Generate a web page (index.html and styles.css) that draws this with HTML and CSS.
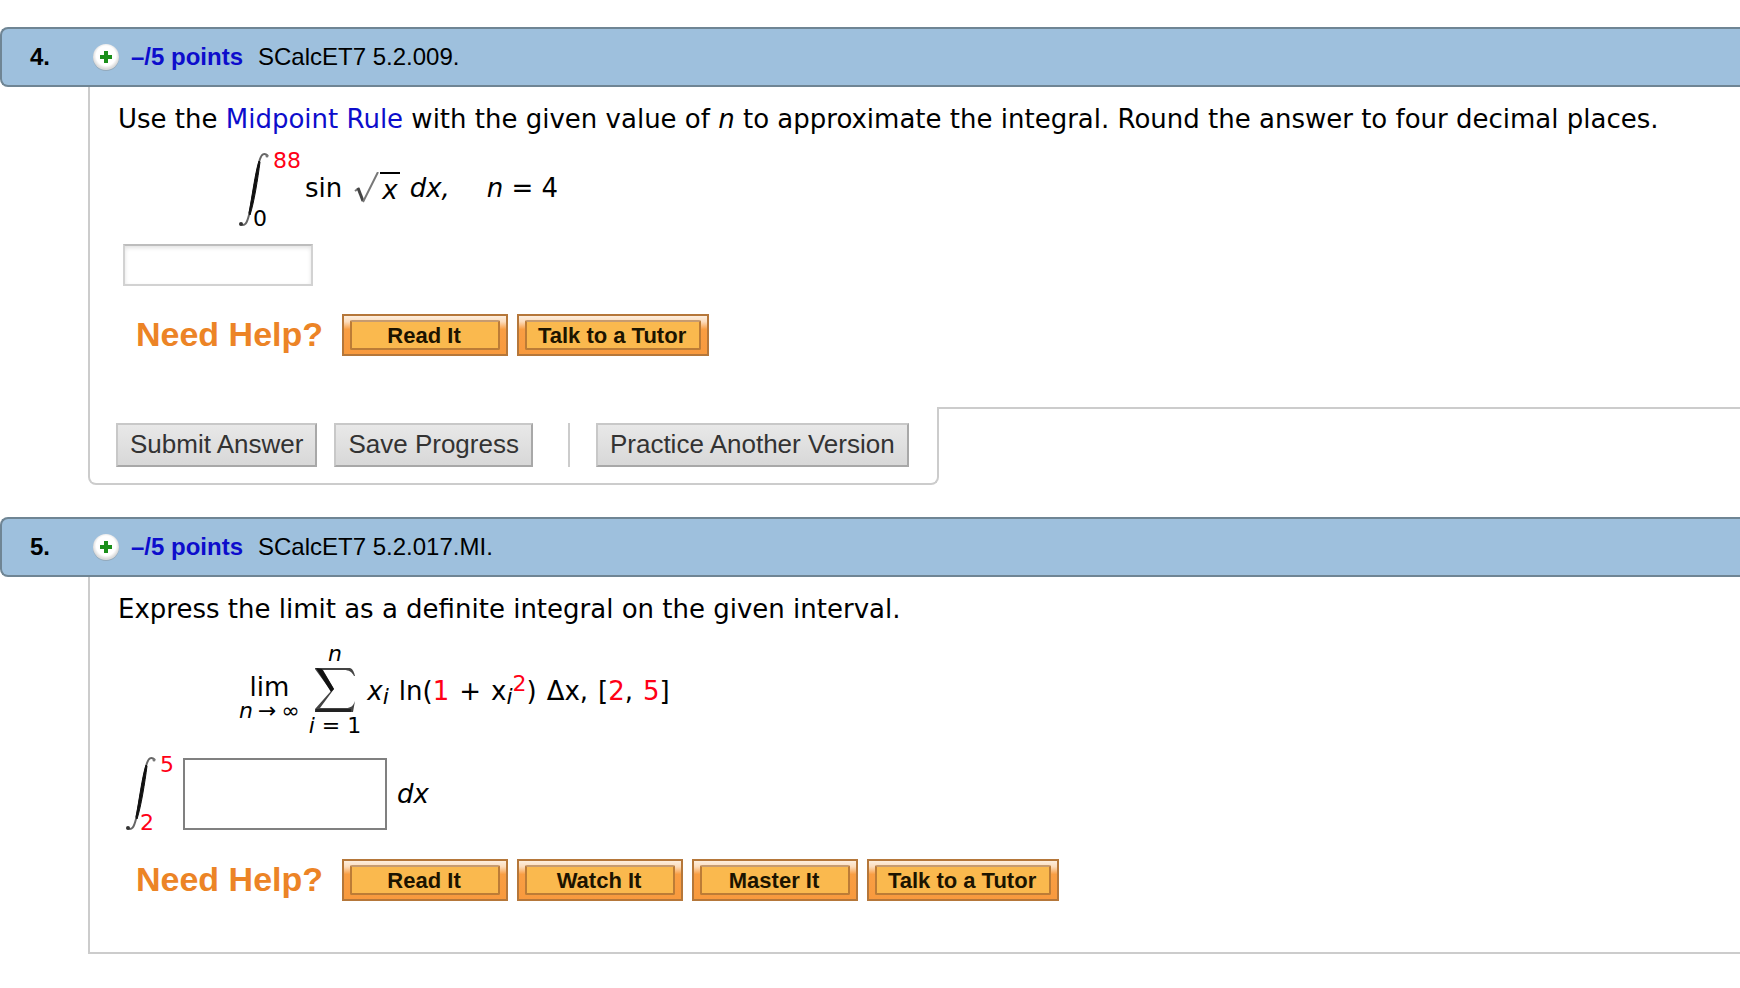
FILE: index.html
```html
<!DOCTYPE html>
<html lang="en">
<head>
    <meta charset="utf-8">
    <title>SCalcET7 5.2</title>
    <link rel="stylesheet" href="styles.css">
</head>
<body>
    <!-- shared symbols -->
    <svg class="defs" width="0" height="0">
        <defs>
            <radialGradient id="knob" cx="50%" cy="45%" r="50%">
                <stop offset="0.75" stop-color="#fff"/>
                <stop offset="1" stop-color="#dcdcdc"/>
            </radialGradient>
            <symbol id="plus" viewBox="0 0 28 28">
                <circle cx="14" cy="15" r="13" fill="#8b99a5" opacity="0.6"/>
                <circle cx="14" cy="14" r="13" fill="url(#knob)"/>
                <path d="M12 8h4v4h4v4h-4v4h-4v-4h-4v-4h4z" fill="#1a8f1a"/>
            </symbol>
            <symbol id="integral" viewBox="0 0 32 74">
                <path d="M29 3C26 0 23 0 21 6C18 15 13 50 10 62C8 70 6 74 1 71" fill="none" stroke="#666" stroke-width="2"/>
                <path d="M20 8C16 20 13 45 10 60L11 62C15 50 19 25 21 9z" fill="#111" stroke="#111"/>
                <circle cx="28" cy="3" r="1.5" fill="#777"/>
                <circle cx="2" cy="71" r="2" fill="#333"/>
            </symbol>
        </defs>
    </svg>

    <section class="question">
        <header class="question-header">
            <span class="number">4.</span>
            <svg class="plus" aria-hidden="true"><use href="#plus"/></svg>
            <a class="points" href="#">–/5 points</a>
            <span>SCalcET7 5.2.009.</span>
        </header>
        <div class="question-body">
            <p class="prompt">Use the <a href="#">Midpoint Rule</a> with the given value of <i>n</i> to approximate the integral. Round the answer to four decimal places.</p>
            <div class="formula indent">
                <div class="integral">
                    <svg class="integral-sign" aria-hidden="true"><use href="#integral"/></svg>
                    <span class="upper red">88</span>
                    <span class="lower">0</span>
                </div>
                <div class="integrand">
                    <span>sin</span>
                    <span class="root">
                        <svg width="26" height="32" viewBox="0 0 26 32" aria-hidden="true">
                            <path d="M1 19L5 16" fill="none" stroke="#777" stroke-width="2"/>
                            <path d="M4 16L9 29" fill="none" stroke="#444" stroke-width="3"/>
                            <path d="M9 30L24 0" fill="none" stroke="#777" stroke-width="2"/>
                        </svg>
                        <i class="radicand">x</i>
                    </span>
                    <i>dx,</i>
                    <span class="given"><i>n</i> = 4</span>
                </div>
            </div>
            <input class="answer" type="text" aria-label="Answer to question 4">
            <div class="help">
                <span class="help-title">Need Help?</span>
                <button class="help-button">Read It</button>
                <button class="help-button wide">Talk to a Tutor</button>
            </div>
        </div>
        <div class="question-footer">
            <div class="actions">
                <button class="action">Submit Answer</button>
                <button class="action">Save Progress</button>
                <span class="divider"></span>
                <button class="action">Practice Another Version</button>
            </div>
            <div class="footer-line"></div>
        </div>
    </section>

    <section class="question">
        <header class="question-header">
            <span class="number">5.</span>
            <svg class="plus" aria-hidden="true"><use href="#plus"/></svg>
            <a class="points" href="#">–/5 points</a>
            <span>SCalcET7 5.2.017.MI.</span>
        </header>
        <div class="question-body closed">
            <p class="prompt">Express the limit as a definite integral on the given interval.</p>
            <div class="formula indent">
                <div class="limit">
                    <span>lim</span>
                    <span class="limit-under"><i>n</i><span>→</span><span>∞</span></span>
                </div>
                <div class="sum">
                    <i>n</i>
                    <svg width="42" height="46" viewBox="0 0 42 46" aria-hidden="true">
                        <path d="M1 1H36C39 2 40 5 41 9H40C38 5 35 3 30 3H9L20 22L6 41H32C37 41 39 39 41 34L39 45H1V42L17 24L1 2z" fill="#444"/>
                        <path d="M2 1L8 2L20 22L17 25z" fill="#111"/>
                        <path d="M2 42H37V45H1z" fill="#222"/>
                    </svg>
                    <span><i>i</i> = 1</span>
                </div>
                <div class="summand">
                    <span><i>x<sub>i</sub></i></span>
                    <span>ln(<span class="red">1</span></span>
                    <span>+</span>
                    <span>x<sub><i>i</i></sub><sup class="red">2</sup>)</span>
                    <span>Δx,</span>
                    <span>[<span class="red">2</span>,</span>
                    <span><span class="red">5</span>]</span>
                </div>
            </div>
            <div class="formula answer-row">
                <div class="integral">
                    <svg class="integral-sign" aria-hidden="true"><use href="#integral"/></svg>
                    <span class="upper red">5</span>
                    <span class="lower red">2</span>
                </div>
                <input class="math-answer" type="text" aria-label="Integrand">
                <i>dx</i>
            </div>
            <div class="help">
                <span class="help-title">Need Help?</span>
                <button class="help-button">Read It</button>
                <button class="help-button">Watch It</button>
                <button class="help-button">Master It</button>
                <button class="help-button wide">Talk to a Tutor</button>
            </div>
        </div>
    </section>
</body>
</html>
```
FILE: styles.css
```css
* {
    box-sizing: border-box;
}

body {
    margin: 0;
    padding-top: 27px;
    background-color: #fff;
    color: #000;
    font-family: Verdana, "DejaVu Sans", sans-serif;
    font-size: 26px;
    line-height: 32px;
}

a {
    color: #0d0dcc;
    text-decoration: none;
}

.defs {
    position: absolute;
}

.red {
    color: #ff0016;
}

.question {
    margin-bottom: 32px;
}

/* blue title bar */
.question-header {
    display: flex;
    align-items: center;
    height: 60px;
    padding-left: 28px;
    background-color: #9ec0dd;
    border: 2px solid #6f8594;
    border-right: none;
    border-radius: 8px 0 0 8px;
    font-family: Arial, "Liberation Sans", sans-serif;
    font-size: 24px;
}

.number {
    width: 62px;
    font-weight: bold;
}

.plus {
    width: 28px;
    height: 28px;
    margin-right: 11px;
}

.points {
    margin-right: 15px;
    font-weight: bold;
}

.question-body {
    margin-left: 88px;
    padding: 16px 0 51px 28px;
    border-left: 2px solid #ccc;
}

.question-body.closed {
    border-bottom: 2px solid #ccc;
}

.prompt {
    margin: 0 0 18px;
}

/* math */
.formula {
    display: flex;
    align-items: center;
}

.formula.indent {
    padding-left: 121px;
}

.integral {
    display: grid;
    grid-template-columns: 34px auto;
    height: 74px;
    font-size: 22px;
    line-height: 22px;
}

.integral-sign {
    grid-area: 1 / 1 / 3 / 2;
    width: 32px;
    height: 74px;
}

.upper {
    grid-area: 1 / 2;
    margin-top: -3px;
}

/* the lower limit tucks in beside the foot of the sign */
.lower {
    grid-area: 2 / 1;
    align-self: end;
    margin-bottom: -3px;
    padding-left: 14px;
}

.integrand {
    display: flex;
    padding: 0 0 4px 4px;
}

.root {
    display: flex;
    margin: 0 10px 0 12px;
}

.radicand {
    height: 30px;
    padding: 0 2px;
    border-top: 2px solid #000;
}

.given {
    margin-left: 37px;
}

.limit {
    display: flex;
    flex-direction: column;
    align-items: center;
    padding-top: 16px;
    line-height: 26px;
}

.limit-under {
    display: flex;
    gap: 5px;
    font-size: 22px;
    line-height: 22px;
}

.sum {
    display: flex;
    flex-direction: column;
    align-items: center;
    gap: 2px;
    margin: 0 6px 0 9px;
    font-size: 22px;
    line-height: 22px;
}

.summand {
    display: flex;
    gap: 10px;
    padding-top: 2px;
}

.summand sub,
.summand sup {
    font-size: 22px;
    line-height: 0;
}

.summand sub {
    vertical-align: -4px;
}

.summand sup {
    vertical-align: 9px;
}

.answer {
    display: block;
    width: 190px;
    height: 42px;
    margin: 17px 0 0 5px;
    padding: 4px 8px;
    border: 2px solid #d2d2d2;
    border-top-color: #bdbdbd;
    box-shadow: inset 0 2px 4px #e2e2e2;
    font: inherit;
}

.answer-row {
    padding: 20px 0 0 8px;
}

.math-answer {
    width: 204px;
    height: 72px;
    margin: 0 10px 0 9px;
    padding: 8px;
    border: 2px solid #808080;
    font: inherit;
}

/* help buttons */
.help {
    display: flex;
    align-items: center;
    gap: 9px;
    margin-top: 28px;
    padding-left: 18px;
    font-family: Arial, "Liberation Sans", sans-serif;
    font-weight: bold;
}

.help-title {
    margin-right: 10px;
    padding-bottom: 2px;
    color: #ec8426;
    font-size: 34px;
}

.help-button {
    position: relative;
    width: 166px;
    height: 42px;
    padding: 2px 2px 0 0;
    background: linear-gradient(#fdeede 0, #fcdcbc 15%, #f99e43 35%, #f89a3e 100%);
    border: 2px solid #b5773a;
    color: #1c1400;
    font: inherit;
    font-size: 22px;
    z-index: 0;
}

.help-button.wide {
    width: 192px;
}

/* inner panel of the button face */
.help-button::before {
    content: "";
    position: absolute;
    inset: 4px 6px;
    z-index: -1;
    background-color: #fab94e;
    border: 2px solid #bc7c36;
    border-top-color: #c69b70;
    border-radius: 2px;
}

/* submit area */
.question-footer {
    display: flex;
    margin-left: 88px;
}

.actions {
    display: flex;
    padding: 16px 28px 16px 26px;
    border: 2px solid #ccc;
    border-top: none;
    border-radius: 0 0 8px 8px;
}

.action {
    height: 44px;
    padding: 0 12px 2px;
    background: linear-gradient(#e8e8e8, #d8d8d8);
    border: 2px solid #c8c8c8;
    border-right-color: #a8a8a8;
    border-bottom-color: #a8a8a8;
    color: #333;
    font-family: Arial, "Liberation Sans", sans-serif;
    font-size: 26px;
}

.action + .action {
    margin-left: 17px;
}

.divider {
    width: 2px;
    margin: 0 26px 0 35px;
    background-color: #ccc;
}

.footer-line {
    flex: 1;
    border-top: 2px solid #ccc;
}
```
